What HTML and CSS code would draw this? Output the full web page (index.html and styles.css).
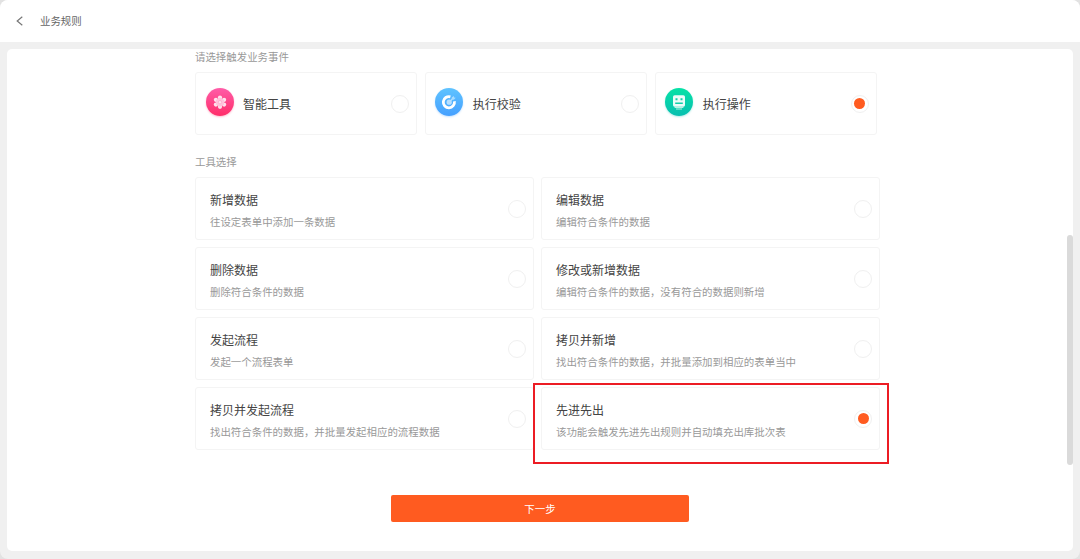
FILE: index.html
```html
<!DOCTYPE html>
<html lang="zh-CN">
<head>
  <meta charset="UTF-8">
  <title>业务规则</title>
  <link rel="stylesheet" href="styles.css">
</head>
<body>
  <div class="app">

    <!-- Header -->
    <header class="header">
      <svg class="back" width="8" height="10" viewBox="0 0 8 10"><path d="M6.3 .8 1.2 5l5.1 4.2" fill="none" stroke="#777" stroke-width="1.2"/></svg>
      <span>业务规则</span>
    </header>

    <main class="panel">
      <div class="content">
        <h3 class="label">请选择触发业务事件</h3>
        <div class="events">
          <div class="card event">
            <svg class="icon pink" viewBox="0 0 28 28">
              <g fill="#fff" fill-opacity=".85">
                <circle cx="14" cy="9.6" r="2.1"/><circle cx="18.1" cy="11.8" r="2.1"/>
                <circle cx="18.1" cy="16.6" r="2.1"/><circle cx="14" cy="18.8" r="2.1"/>
                <circle cx="9.9" cy="16.6" r="2.1"/><circle cx="9.9" cy="11.8" r="2.1"/>
              </g>
              <path d="M14 9.6l4 2.3v4.6l-4 2.3-4-2.3v-4.6z" fill="#ffc4dc"/>
              <circle cx="14" cy="14.2" r="1.7" fill="#ffe3ee" stroke="#ff9cc2" stroke-width=".6"/>
            </svg>
            <span class="name">智能工具</span>
            <i class="radio"></i>
          </div>
          <div class="card event">
            <svg class="icon blue" viewBox="0 0 28 28">
              <path d="M15.4 8.8A5.6 5.6 0 1 0 19.4 13.2" fill="none" stroke="#fff" stroke-width="2.8"/>
              <circle cx="14.2" cy="14.2" r="2.6" fill="#b9e0ff"/>
              <path d="M14.2 14.2l3.2-3.2" stroke="#b9e0ff" stroke-width="1.2"/>
              <path d="M16.6 11.6l.2-2 2-1.7.3 1.5 1.6.4-1.8 1.9z" fill="#a8dcff"/>
            </svg>
            <span class="name">执行校验</span>
            <i class="radio"></i>
          </div>
          <div class="card event">
            <svg class="icon green" viewBox="0 0 28 28">
              <rect x="8" y="7.3" width="12" height="11.4" rx="1.6" fill="#fff" fill-opacity=".92"/>
              <path d="M10.5 10.2h2v2h-2zM15.5 10.2h2v2h-2zM10.2 14.4h7.6v1.5h-7.6z" fill="#0fd0a8"/>
              <path d="M9.6 19.5h8.8M11 21h6" stroke="#b5f2e3" stroke-width="1"/>
            </svg>
            <span class="name">执行操作</span>
            <i class="radio checked"></i>
          </div>
        </div>

        <h3 class="label label-tools">工具选择</h3>
        <div class="tools">
          <div class="card tool">
            <div><h4>新增数据</h4><p>往设定表单中添加一条数据</p></div>
            <i class="radio"></i>
          </div>
          <div class="card tool">
            <div><h4>编辑数据</h4><p>编辑符合条件的数据</p></div>
            <i class="radio"></i>
          </div>
          <div class="card tool">
            <div><h4>删除数据</h4><p>删除符合条件的数据</p></div>
            <i class="radio"></i>
          </div>
          <div class="card tool">
            <div><h4>修改或新增数据</h4><p>编辑符合条件的数据，没有符合的数据则新增</p></div>
            <i class="radio"></i>
          </div>
          <div class="card tool">
            <div><h4>发起流程</h4><p>发起一个流程表单</p></div>
            <i class="radio"></i>
          </div>
          <div class="card tool">
            <div><h4>拷贝并新增</h4><p>找出符合条件的数据，并批量添加到相应的表单当中</p></div>
            <i class="radio"></i>
          </div>
          <div class="card tool">
            <div><h4>拷贝并发起流程</h4><p>找出符合条件的数据，并批量发起相应的流程数据</p></div>
            <i class="radio"></i>
          </div>
          <div class="card tool marked">
            <div><h4>先进先出</h4><p>该功能会触发先进先出规则并自动填充出库批次表</p></div>
            <i class="radio checked"></i>
          </div>
        </div>

        <button class="next">下一步</button>
      </div>
      <div class="scrollbar"></div>
    </main>
  </div>
</body>
</html>
```

FILE: styles.css
```css
* { margin: 0; padding: 0; box-sizing: border-box; }
body {
  font-family: "Noto Sans CJK SC", sans-serif;
  background: #e2e2e2;
  height: 100vh;
  overflow: hidden;
}
.app {
  height: 100vh;
  display: flex;
  flex-direction: column;
  background: #f0f0f0;
  border-radius: 8px;
  overflow: hidden;
}
.header {
  height: 42px;
  padding: 0 16px;
  display: flex;
  align-items: center;
  gap: 16px;
  background: #fff;
  color: #666;
  font-size: 10.45px;
}
.header span {
  padding-bottom: 2px;
}
.panel {
  position: relative;
  flex: 1;
  margin: 7px 7px 8px;
  background: #fff;
  border-radius: 5px;
  overflow: hidden;
}
.content {
  width: 686px;
  margin-left: 188px;
}
.label {
  height: 16px;
  line-height: 16px;
  font-size: 10.45px;
  font-weight: normal;
  color: #999;
}
.card {
  border: 1px solid #f4f4f4;
  border-radius: 3px;
  display: flex;
  align-items: center;
}
.events {
  width: 682px;
  margin-top: 7px;
  display: grid;
  grid-template-columns: repeat(3, 1fr);
  gap: 7.5px;
}
.event {
  height: 63px;
  padding: 0 7px 0 9.5px;
}
.icon {
  width: 28px;
  height: 28px;
  margin-top: -3px;
  border-radius: 50%;
}
.pink {
  background: linear-gradient(#ff5ca8, #ff2d69);
  box-shadow: 0 1px 2px rgba(255,45,105,0.3);
}
.blue {
  background: linear-gradient(#5fc3ff, #45a0ff);
  box-shadow: 0 1px 2px rgba(69,160,255,0.3);
}
.green {
  background: linear-gradient(#06e2a6, #08bfb0);
  box-shadow: 0 1px 2px rgba(8,191,176,0.3);
}
.name {
  margin-left: 9.5px;
  font-size: 12px;
  color: #444;
}
.radio {
  width: 18px;
  height: 18px;
  margin-left: auto;
  border: 1px solid #f0f0f0;
  border-radius: 50%;
  display: flex;
  align-items: center;
  justify-content: center;
}
.checked::after {
  content: "";
  width: 11px;
  height: 11px;
  border-radius: 50%;
  background: #ff5b20;
}
.label-tools {
  margin-top: 19px;
}
.tools {
  width: 685px;
  margin-top: 7px;
  display: grid;
  grid-template-columns: 1fr 1fr;
  gap: 7px;
}
.tool {
  height: 63px;
  padding: 0 7px 0 14px;
}
.tool > div {
  padding-top: 3px;
}
.tool h4 {
  line-height: 18px;
  font-size: 12px;
  font-weight: normal;
  color: #444;
}
.tool p {
  margin-top: 5px;
  line-height: 16px;
  font-size: 10.45px;
  color: #999;
}
.marked {
  position: relative;
}
/* red frame over the highlighted tool */
.marked::before {
  content: "";
  position: absolute;
  box-sizing: border-box;
  top: -5px;
  left: -9px;
  width: 356px;
  height: 81px;
  border: 2px solid #ec1c24;
}
.next {
  display: block;
  width: 298px;
  height: 27px;
  margin: 45px 0 0 196px;
  padding-bottom: 1px;
  border: none;
  border-radius: 2px;
  background: #ff5b20;
  color: #fff;
  font-family: inherit;
  font-size: 10.45px;
}
.scrollbar {
  position: absolute;
  top: 186px;
  right: 0;
  width: 6px;
  height: 230px;
  border-radius: 3px;
  background: #dadada;
}
```
